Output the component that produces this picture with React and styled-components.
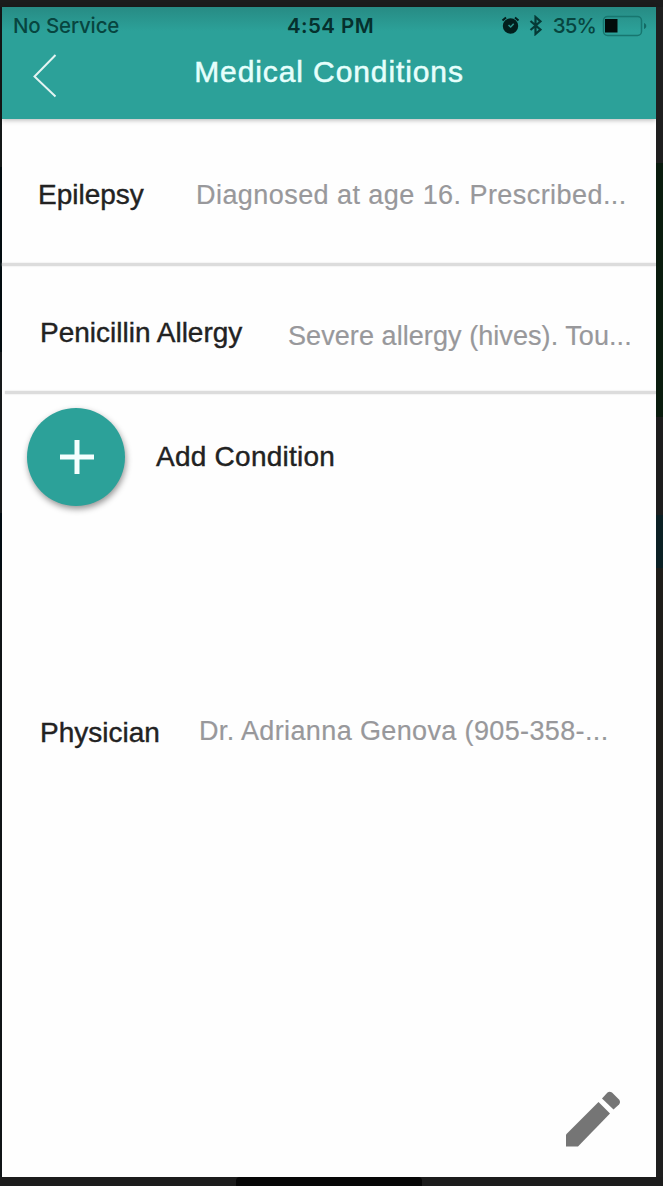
import React from 'react';
import styled, { createGlobalStyle, ThemeProvider } from 'styled-components';

const theme = {
  colors: {
    primary: '#2ca199',
    text: '#222222',
    muted: '#98989b',
    divider: '#dcdcdc',
    icon: '#757575',
    backdrop: '#1c1c1c',
  },
};

const GlobalStyle = createGlobalStyle`
  * {
    box-sizing: border-box;
  }

  body {
    margin: 0;
    background: ${theme.colors.backdrop};
    font-family: 'Liberation Sans', Arial, sans-serif;
    overflow: hidden;
  }
`;

const Backdrop = styled.div`
  display: grid;
  grid-template-columns: 2px 654px 7px;
  grid-template-rows: 7px 1170px 9px;
  width: 663px;
  height: 1186px;
  background: ${props => props.theme.colors.backdrop};
`;

const LeftEdge = styled.div`
  grid-area: 2 / 1;
  background: linear-gradient(#141818 0 160px, #020c10 160px 345px, #16191b 345px 506px, #020c12 506px 563px, #101416 563px);
`;

const RightEdge = styled.div`
  grid-area: 2 / 3;
  background: linear-gradient(
    #1f1f1f 0 156px,
    #0a1c0e 156px 410px,
    #1d1d1d 410px 508px,
    #0b2024 508px 561px,
    #1e1d19 561px 763px,
    #1e1e1e 763px
  );
`;

const HomeBar = styled.div`
  grid-area: 3 / 2;
  justify-self: center;
  width: 186px;
  border-radius: 4px 4px 0 0;
  background: #060606;
`;

const Screen = styled.main`
  grid-area: 2 / 2;
  display: flex;
  flex-direction: column;
  background: #fefefe;
`;

const Header = styled.header`
  flex: none;
  height: 112px;
  background: linear-gradient(#278b84 0, ${props => props.theme.colors.primary} 24px);
  box-shadow: 0 1px 5px rgba(0, 0, 0, 0.3);
`;

const StatusBar = styled.div`
  display: grid;
  grid-template-columns: 1fr auto 1fr;
  align-items: center;
  height: 37px;
  padding: 0 8px 0 11px;
  font-family: Inter, sans-serif;
  font-size: 20.5px;
  font-weight: 500;
  color: #07453f;
`;

const Carrier = styled.span`
  letter-spacing: -0.15px;
`;

const Time = styled.span`
  font-weight: 600;
  letter-spacing: 0.45px;
  color: #05302d;
`;

const Indicators = styled.div`
  display: flex;
  align-items: center;
  justify-content: flex-end;
`;

const AlarmIcon = styled.svg`
  margin-right: 9px;
`;

const BluetoothIcon = styled.svg`
  margin-right: 11px;
`;

const BatteryLevel = styled.span`
  letter-spacing: -0.9px;
`;

const BatteryIcon = styled.svg`
  margin-left: 6px;
`;

const TitleBar = styled.div`
  display: grid;
  grid-template-columns: 80px 1fr 80px;
  height: 75px;
`;

const BackButton = styled.button`
  justify-self: start;
  align-self: start;
  margin: 8px 0 0 29px;
  padding: 0;
  border: 0;
  background: none;
  line-height: 0;
`;

const Title = styled.h1`
  margin: 10px 0 0;
  font-size: 30px;
  line-height: 36px;
  font-weight: 400;
  letter-spacing: 0.9px;
  text-align: center;
  white-space: nowrap;
  color: #e6fffc;
  -webkit-text-stroke: 0.5px #e6fffc;
`;

const Row = styled.div`
  display: flex;
  align-items: flex-start;
  height: ${props => props.$height}px;
  padding: ${props => props.$top}px 0 0 ${props => props.$left}px;
`;

const Divider = styled.hr`
  flex: none;
  height: 3px;
  margin: 0 0 1px ${props => props.$inset || 0}px;
  border: 0;
  background: ${props => props.theme.colors.divider};
  box-shadow: 0 0 2px ${props => props.theme.colors.divider};
`;

const Label = styled.span`
  flex: none;
  width: ${props => props.$width}px;
  font-size: 28px;
  line-height: 32px;
  white-space: nowrap;
  letter-spacing: ${props => props.$spacing || 0}px;
  color: ${props => props.theme.colors.text};
  -webkit-text-stroke: 0.4px ${props => props.theme.colors.text};
`;

const Detail = styled.span`
  margin-top: ${props => props.$shift || 0}px;
  font-size: 27px;
  line-height: 32px;
  white-space: nowrap;
  letter-spacing: ${props => props.$spacing || 0}px;
  color: ${props => props.theme.colors.muted};
  -webkit-text-stroke: 0.2px ${props => props.theme.colors.muted};
`;

const AddRow = styled.div`
  display: flex;
  align-items: center;
  height: 124px;
  padding-left: 25px;
`;

const AddButton = styled.button`
  display: flex;
  align-items: center;
  justify-content: center;
  width: 98px;
  height: 98px;
  margin-right: 31px;
  padding: 0 0 0 2px;
  border: 0;
  border-radius: 50%;
  background: ${props => props.theme.colors.primary};
  box-shadow: 1px 3px 6px rgba(0, 0, 0, 0.42);
`;

const Footer = styled.footer`
  display: flex;
  justify-content: flex-end;
  margin-top: auto;
  padding: 0 35px 30px 0;
`;

const EditButton = styled.button`
  padding: 0;
  border: 0;
  background: none;
  line-height: 0;
`;

function StatusIcons() {
  return (
    <Indicators>
      <AlarmIcon width="19" height="19" viewBox="0 0 19 19" fill="none">
        <circle cx="9.5" cy="10" r="6" fill="#021f1d" stroke="#021f1d" strokeWidth="3.4" />
        <path d="M1.5 4.5 5 1.5M17.5 4.5 14 1.5" stroke="#021f1d" strokeWidth="2" />
        <path d="m7.5 9 2.2 2 3-3.2" stroke="#2a9189" strokeWidth="1.6" />
      </AlarmIcon>
      <BluetoothIcon width="13" height="21" viewBox="0 0 13 21" fill="none">
        <path d="m1.5 6 10 8.6-5 4.4V2l5 4.4-10 8.6" stroke="#063a36" strokeWidth="2.2" />
      </BluetoothIcon>
      <BatteryLevel>35%</BatteryLevel>
      <BatteryIcon width="46" height="22" viewBox="0 0 46 22" fill="none">
        <rect x="1.5" y="1.5" width="38" height="19" rx="4" stroke="#17766f" strokeWidth="1.5" />
        <rect x="3" y="4" width="12.5" height="13.5" fill="#020c0b" />
        <path d="M42 8c3 1 3 5 0 6z" fill="#136a64" />
      </BatteryIcon>
    </Indicators>
  );
}

function App() {
  return (
    <ThemeProvider theme={theme}>
      <GlobalStyle />
      <Backdrop>
        <LeftEdge />
        <Screen>
          <Header>
            <StatusBar>
              <Carrier>No Service</Carrier>
              <Time>4:54 PM</Time>
              <StatusIcons />
            </StatusBar>
            <TitleBar>
              <BackButton aria-label="Back">
                <svg width="28" height="48" viewBox="0 0 28 48" fill="none">
                  <path d="M24.5 3 3.5 24.5 24.5 44.5" stroke="#e3f4f2" strokeWidth="2" />
                </svg>
              </BackButton>
              <Title>Medical Conditions</Title>
            </TitleBar>
          </Header>

          <Row $height={144} $top={60} $left={36}>
            <Label $width={158}>Epilepsy</Label>
            <Detail $spacing={0.44}>Diagnosed at age 16. Prescribed...</Detail>
          </Row>
          <Divider />
          <Row $height={124} $top={50} $left={38}>
            <Label $width={248}>Penicillin Allergy</Label>
            <Detail $shift={3} $spacing={0.07}>Severe allergy (hives). Tou...</Detail>
          </Row>
          <Divider $inset={3} />

          <AddRow>
            <AddButton aria-label="Add condition">
              <svg width="34" height="34" viewBox="0 0 34 34">
                <path d="M17 0v34M0 17h34" stroke="#f4fffe" strokeWidth="5" />
              </svg>
            </AddButton>
            <Label $spacing={0.25}>Add Condition</Label>
          </AddRow>

          <Row $height={240} $top={198} $left={38}>
            <Label $width={159}>Physician</Label>
            <Detail $shift={-2} $spacing={0.37}>Dr. Adrianna Genova (905-358-...</Detail>
          </Row>

          <Footer>
            <EditButton aria-label="Edit">
              <svg width="55" height="56" viewBox="0 0 55 56" fill={theme.colors.icon}>
                <path d="M0 43.500 32.500 11 44 22.500 12 55.500H0z" />
                <path d="M36 7.500 41.500 1.500Q43.500 0 46 1.500L53 8.500Q55 11 53 13.500L47.500 18.500z" />
              </svg>
            </EditButton>
          </Footer>
        </Screen>
        <RightEdge />
        <HomeBar />
      </Backdrop>
    </ThemeProvider>
  );
}

export default App;
